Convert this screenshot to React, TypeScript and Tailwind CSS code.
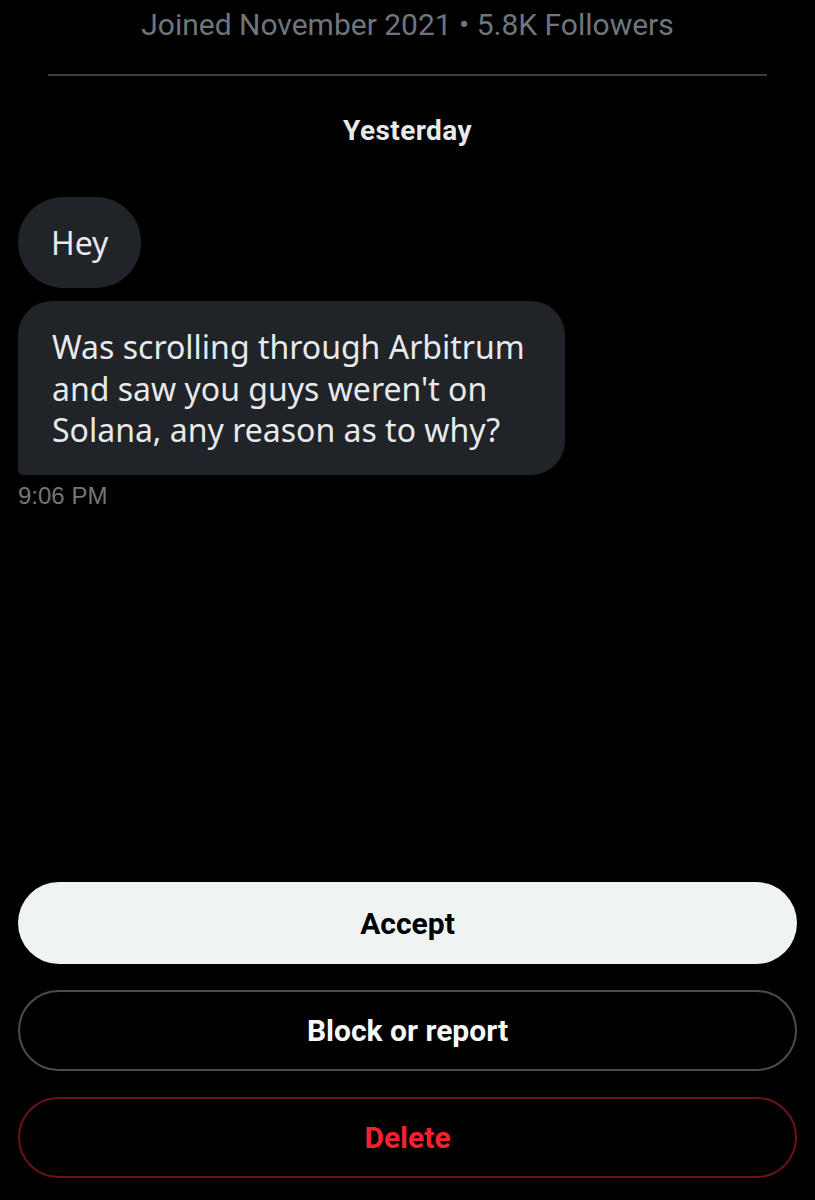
export default function App() {
  return (
    <div className="w-[815px] h-[1200px] bg-black flex flex-col overflow-hidden">
      <div
        className="text-center text-[#6e767d] text-[30px] leading-[36px] mt-[7px]"
        style={{ fontFamily: 'Roboto, "Liberation Sans", sans-serif' }}
      >
        Joined November 2021 • 5.8K Followers
      </div>
      <div className="mx-[48px] mt-[31px] h-[2px] bg-[#3a3d40]" />
      <div
        className="text-center text-[#e7e9ea] font-bold text-[28px] leading-[32px] mt-[39px] tracking-[0.4px]"
        style={{ fontFamily: 'Roboto, "Liberation Sans", sans-serif' }}
      >
        Yesterday
      </div>
      <div
        className="px-[18px] mt-[50px] flex flex-col items-start"
        style={{ fontFamily: '"Noto Sans", "Open Sans", sans-serif' }}
      >
        <div className="bg-[#202327] text-[#e7e9ea] text-[32px] leading-[41px] rounded-[45px] h-[91px] px-[33px] flex items-center">
          Hey
        </div>
        <div className="mt-[13px] w-[547px] bg-[#202327] text-[#e7e9ea] text-[32px] leading-[41.5px] rounded-[34px] rounded-bl-[5px] pl-[34px] pr-[16px] pt-[25px] pb-[24px]">
          Was scrolling through Arbitrum and saw you guys weren't on Solana, any reason as to why?
        </div>
        <div
          className="mt-[8px] text-[#71767b] text-[24px] leading-[26px]"
          style={{ fontFamily: '"Liberation Sans", Arial, sans-serif' }}
        >
          9:06 PM
        </div>
      </div>
      <div className="flex-1" />
      <div
        className="px-[18px] pb-[22px] flex flex-col gap-[26px]"
        style={{ fontFamily: 'Roboto, "Liberation Sans", sans-serif' }}
      >
        <button className="h-[82px] w-full rounded-full bg-[#eff3f4] text-black font-bold text-[30px]">
          Accept
        </button>
        <button className="h-[81px] w-full rounded-full border-2 border-[#4a4d50] text-[#f7f9f9] font-bold text-[30px]">
          Block or report
        </button>
        <button className="h-[81px] w-full rounded-full border-2 border-[#6e1219] text-[#f4212e] font-bold text-[30px]">
          Delete
        </button>
      </div>
    </div>
  );
}
